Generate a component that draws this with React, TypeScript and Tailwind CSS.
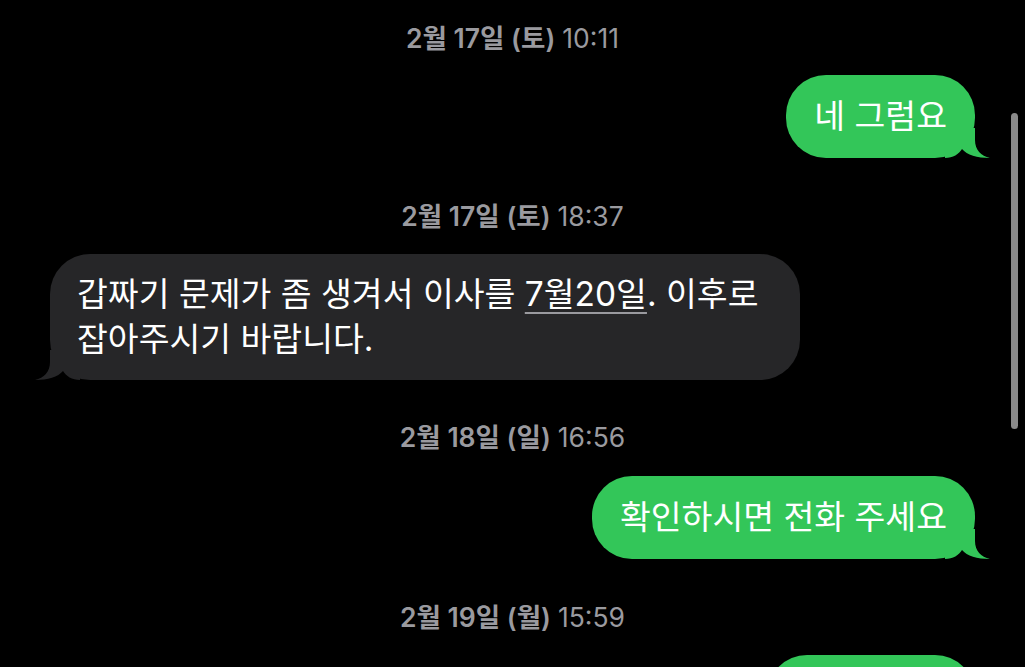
import React from "react";

const FONT = { fontFamily: 'Inter, "Noto Sans CJK KR", sans-serif' };

function Stamp({ date, time }: { date: string; time: string }) {
  return (
    <div className="flex h-[30px] items-center justify-center text-[26.5px] leading-[30px] text-[#9a9a9f]">
      <span className="font-semibold">{date}</span>
      <span className="ml-[7px] font-normal">{time}</span>
    </div>
  );
}

function TailRight({ color }: { color: string }) {
  return (
    <svg
      className="absolute bottom-0 right-[-15px]"
      width="45"
      height="30"
      viewBox="0 0 45 30"
      aria-hidden
    >
      <path
        d="M0 30 C8 30 14 26 17 21 C22 27 32 30 45 30 C36 28 30 22 30 12 L30 0 L0 0 Z"
        fill={color}
      />
    </svg>
  );
}

function TailLeft({ color }: { color: string }) {
  return (
    <svg
      className="absolute bottom-0 left-[-15px]"
      width="45"
      height="30"
      viewBox="0 0 45 30"
      aria-hidden
    >
      <path
        d="M45 30 C37 30 31 26 28 21 C23 27 13 30 0 30 C9 28 15 22 15 12 L15 0 L45 0 Z"
        fill={color}
      />
    </svg>
  );
}

function Sent({ children, w }: { children?: React.ReactNode; w?: string }) {
  return (
    <div className="flex justify-end">
      <div
        className={`relative min-h-[83px] rounded-[40px] bg-[#33c659] px-[28px] py-[19px] text-[33.5px] leading-[45px] text-white ${w ?? ""}`}
      >
        <span className="relative z-10 whitespace-nowrap">{children}</span>
        <TailRight color="#33c659" />
      </div>
    </div>
  );
}

export default function App() {
  return (
    <div className="relative h-[667px] w-full overflow-hidden bg-black" style={FONT}>
      <div className="flex flex-col px-[50px] pt-[23px]">
        <Stamp date="2월 17일 (토)" time="10:11" />
        <div className="mt-[22px]">
          <Sent>네 그럼요</Sent>
        </div>

        <div className="mt-[43px]">
          <Stamp date="2월 17일 (토)" time="18:37" />
        </div>
        <div className="mt-[23px] flex justify-start">
          <div className="relative w-[750px] rounded-[40px] bg-[#262628] px-[27px] py-[18px] text-[33.5px] leading-[45px] text-white">
            <span className="relative z-10">
              갑짜기 문제가 좀 생겨서 이사를{" "}
              <span className="underline decoration-[#9a9a9f] decoration-2 underline-offset-[6px]">
                7월20일
              </span>
              . 이후로
              <br />
              잡아주시기 바랍니다.
            </span>
            <TailLeft color="#262628" />
          </div>
        </div>

        <div className="mt-[42px]">
          <Stamp date="2월 18일 (일)" time="16:56" />
        </div>
        <div className="mt-[24px]">
          <Sent>확인하시면 전화 주세요</Sent>
        </div>

        <div className="mt-[43px]">
          <Stamp date="2월 19일 (월)" time="15:59" />
        </div>
        <div className="mt-[23px]">
          <Sent w="w-[208px]" />
        </div>
      </div>

      <div className="absolute right-[7px] top-[113px] h-[316px] w-[7px] rounded-full bg-[#8a8a8a]" />
    </div>
  );
}
